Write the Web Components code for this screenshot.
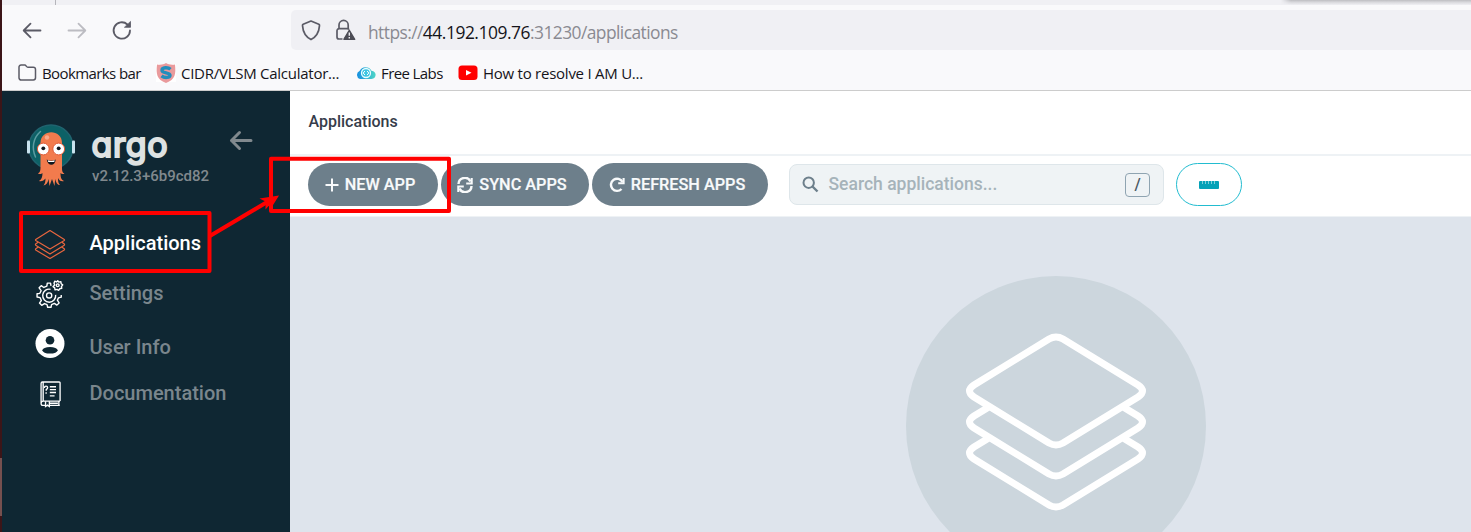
<!DOCTYPE html>
<html lang="en">
<head>
<meta charset="utf-8">
<title>Applications</title>
<style>
body{margin:0;width:1471px;height:532px;overflow:hidden;font-family:Roboto,"Liberation Sans",sans-serif;background:#fff}
</style>
</head>
<body>
<argo-window></argo-window>
<script>
const define=(name,css,html)=>customElements.define(name,class extends HTMLElement{
  connectedCallback(){
    if(this.shadowRoot)return;
    const t=document.createElement('template');
    t.innerHTML=`<style>${css}</style>${html}`;
    this.attachShadow({mode:'open'}).append(t.content.cloneNode(true));
  }
});

define('nav-button',`:host{display:block;width:24px;height:24px;color:#5b5b66}:host([off]){color:#bcbcc2}`,`<slot></slot>`);

define('bookmark-item',`:host{display:flex;align-items:center;height:24px;color:#15141a;font:15px/24px "Open Sans",sans-serif;white-space:nowrap}
::slotted(svg){display:block;width:20px;height:20px;margin-right:5px;flex:none}`,`<slot name="icon"></slot><slot></slot>`);

define('address-bar',`:host{display:flex;align-items:center;height:40px;background:#f0f0f4;border-radius:5px 0 0 5px;box-sizing:border-box;padding-left:9px;color:#8a8a91;font:17.4px/40px "Open Sans",sans-serif}
svg{flex:none;display:block}.lock{margin-left:13px}
.url{margin-left:11px;white-space:nowrap;padding-top:4px;letter-spacing:-.56px}b{font-weight:400;color:#15141a;letter-spacing:-.46px}`,
`<svg width="22" height="22" viewBox="0 0 22 22" fill="none" stroke="#5b5b66" stroke-width="1.7" stroke-linejoin="round"><path d="M11 2 L18.8 5.3 Q19.6 5.7 19.5 6.6 C19 13.5 16.5 17.7 11 20.6 C5.5 17.7 3 13.5 2.500 6.600 Q2.400 5.700 3.200 5.300Z"/></svg>
<svg class="lock" width="22" height="22" viewBox="0 0 22 22" fill="none" stroke="#5b5b66" stroke-width="1.700"><path d="M4 9.500V6a4.600 4.600 0 0 1 9.200 0v3.500M7.500 20H4a2 2 0 0 1-2-2v-6.300a2 2 0 0 1 2-2H12a2 2 0 0 1 2 1"/><path d="M14.300 11.300 L19.700 20.300H8.900Z" fill="#4c4c55" stroke="#4c4c55" stroke-width="1.400" stroke-linejoin="round"/><path d="M14.300 13.500v3.200M14.300 18v1.500" stroke="#f0f0f4" stroke-width="1.400"/></svg>
<div class="url">https://<b>44.192.109.76</b>:31230/applications</div>`);

define('browser-chrome',`:host{display:block;height:91px;box-sizing:border-box;background:#f9f9fb;border-bottom:1px solid #ccc;overflow:hidden}
.tabs{height:5px;background:#f0f0f4;display:flex;justify-content:space-between}
.tabs i{width:1px;margin-left:53px;background:#b5b5bb}.tabs b{width:190px;background:linear-gradient(#bdbdc1,#d9d9dd 45%,#f0f0f4);-webkit-mask:linear-gradient(90deg,transparent,#000 10px)}
.row{display:flex;padding-top:5px;height:40px}.nav{width:289px;display:flex;gap:21px;padding:8px 0 0 18px;box-sizing:border-box;flex:none}
address-bar{flex:1}.marks{display:flex;padding:11px 0 0 13px}
.m1{width:126px;letter-spacing:-.6px}.m2{width:183px;margin-left:15px;letter-spacing:-.26px}.m3{width:87px;margin-left:17px;letter-spacing:-.6px}.m4{margin-left:15px;letter-spacing:-.25px}`,
`<div class="tabs"><i></i><b></b></div>
<div class="row"><div class="nav">
<nav-button><svg width="24" height="24" viewBox="0 0 24 24" fill="none" stroke="currentColor" stroke-width="1.800" stroke-linecap="round" stroke-linejoin="round"><path d="M20.500 12.500H4M10.500 5.700L3.700 12.500l6.800 6.800"/></svg></nav-button>
<nav-button off><svg width="24" height="24" viewBox="0 0 24 24" fill="none" stroke="currentColor" stroke-width="1.800" stroke-linecap="round" stroke-linejoin="round"><path d="M3.500 12.500H20M13.500 5.700l6.800 6.800-6.800 6.800"/></svg></nav-button>
<nav-button><svg width="24" height="24" viewBox="0 0 24 24" fill="none" stroke="currentColor" stroke-width="1.800" stroke-linecap="round"><path d="M20 12.500a8.200 8.200 0 1 1-2.600-6"/><path d="M20.500 3.800V9.300H14.800Z" fill="currentColor" stroke-width=".800" stroke-linejoin="round"/></svg></nav-button>
</div><address-bar></address-bar></div>
<div class="marks">
<bookmark-item class="m1"><svg slot="icon" style="width:22px;margin-right:5px" viewBox="0 0 22 20" fill="none" stroke="#5b5b66" stroke-width="1.500" stroke-linejoin="round"><path d="M5.800 2h4c1.200 0 1.700 2.300 3 2.300h5.500a2.200 2.200 0 0 1 2.200 2.200v8.300a2.200 2.200 0 0 1-2.200 2.200H6.200a2.200 2.200 0 0 1-2.200-2.200V4.200a2 2 0 0 1 2-2.200z"/></svg>Bookmarks bar</bookmark-item>
<bookmark-item class="m2"><svg slot="icon" viewBox="0 0 20 20"><path fill="#fff" d="M0 1h20v18H0z"/><path fill="#e99a9c" d="M10 0c2 1.600 6 2 9 1.500 1 9.500.500 15-9 18.500C.500 16.500 0 11 1 1.500 4 2 8 1.600 10 0z"/><path d="M14.500 6.300C12 4 6 4.200 6 7.200c0 3.500 8 1.800 8 5 0 2.700-5.500 3-8.500.6" fill="none" stroke="#238ebc" stroke-width="3.400"/></svg>CIDR/VLSM Calculator...</bookmark-item>
<bookmark-item class="m3"><svg slot="icon" viewBox="0 0 20 20"><defs><linearGradient id="g"><stop stop-color="#168fe0"/><stop offset="1" stop-color="#4fd6c7"/></linearGradient></defs><path fill="url(#g)" d="M4 16a4.300 4.300 0 0 1-.5-8 6.800 6.800 0 0 1 12-.3c6 .5 5 8.300 0 8.300z"/><circle cx="10" cy="10" r="4.500" fill="#3fc6e2" stroke="#e9fcff" stroke-width="1.300"/><path d="M8.900 8l-1.700 2 1.700 2M11.100 8l1.700 2-1.700 2" fill="none" stroke="#fff"/></svg>Free Labs</bookmark-item>
<bookmark-item class="m4"><svg slot="icon" viewBox="0 0 20 20"><rect x=".5" y="2.500" width="19" height="14.500" rx="3.500" fill="red"/><path d="M8 7l5.500 2.800L8 12.600z" fill="#fff"/></svg>How to resolve I AM U...</bookmark-item>
</div>`);

define('octo-logo',`:host{display:block;width:48px;height:64px}`,
`<svg width="48" height="64" viewBox="0 0 48 64"><circle cx="24" cy="24" r="22" fill="#0d6166" stroke="#20636f" stroke-width="1.500"/><rect x="0" y="17.500" width="3" height="13" rx="1" fill="#c9e3ef"/><rect x="45" y="17.500" width="3" height="13" rx="1" fill="#c9e3ef"/><path d="M8.500 34C4.500 25 6 15 13.500 8.500" fill="none" stroke="#5c9ca2" stroke-width="1.500" stroke-linecap="round"/>
<path fill="#f27b4d" d="M13.500 27V20c0-14.500 21.500-14.500 21.500 0v25c0 4 1 5 2.500 5.500-1.500 1-3 .5-4-.5 0 5 1 7 3.500 8-2.500 1-5-.5-6-3 0 4 .5 5.500 2 7-2.500 0-4-2-4.800-6l-.7 7-2.500-7-2.500 7-1-7c-.8 4-2 6-5 6.500 1.500-2 2-4 2-7-1.500 2-4 3.500-6.500 2.500 2.500-1.500 3.500-4 3.500-8-1 1-3 1.500-4.500.5 2-1 2.500-3 2.500-6z"/>
<circle cx="20" cy="14.500" r="2.200" fill="#faa98a"/><g stroke="#df5a35" stroke-width="1"><circle cx="16.300" cy="26" r="5.900" fill="#fff"/><circle cx="31.700" cy="26" r="5.900" fill="#fff"/></g><circle cx="16.300" cy="25.300" r="1.900" fill="#101820"/><circle cx="31.700" cy="25.300" r="1.900" fill="#101820"/><path d="M19.700 36.500q4.500 2.500 9 0c-.5 7-8 7-9 0z" fill="#101820"/><path d="M20.700 37.200q3.500 1.500 7 0l-.4 1.800h-6z" fill="#fff"/></svg>`);

define('menu-item',`:host{display:flex;align-items:center;height:40px;padding-left:32px;color:#7a868d;font:500 20px/40px Roboto,sans-serif}
:host([active]){color:#fff}::slotted(svg){width:32px;height:32px;margin-right:23.500px;flex:none;overflow:visible}`,`<slot name="icon"></slot><slot></slot>`);

define('side-bar',`:host{display:block;width:288px;flex:none;background:#0f2733}
.brand{display:flex;padding:32px 0 0 25px;height:73px}
.name{margin-left:17px;width:137px}.argo{height:44px;font:400 34px/44px Inter,sans-serif;font-feature-settings:"cv11","ss03";color:#dee2e2;-webkit-text-stroke:2.100px #dee2e2;letter-spacing:.6px;margin-left:-.5px}
.ver{font:500 15px/18px Roboto,sans-serif;color:#81898e;white-space:nowrap}.back{margin-top:5px}
menu-item.a{margin-top:27px}menu-item.s{margin-top:10px}menu-item.u{margin-top:14px}menu-item.d{margin-top:6px}`,
`<div class="brand"><octo-logo></octo-logo><div class="name"><div class="argo">argo</div><div class="ver">v2.12.3+6b9cd82</div></div>
<svg class="back" width="24" height="24" viewBox="0 0 24 24" fill="none" stroke="#81898e" stroke-width="3" stroke-linecap="round" stroke-linejoin="round"><path d="M22 12.500H2.500M10.500 4.500L2.500 12.500l8 8"/></svg></div>
<menu-item class="a" active><svg slot="icon" viewBox="-16 -16 32 32" fill="none" stroke="#e9663e" stroke-width="1.200" stroke-linejoin="round"><g transform="translate(0 1.500)"><path d="M0 -14L14.300 -5Q14.800 -4.500 14.300 -4L0 4.500L-14.300 -4Q-14.800 -4.500 -14.300 -5Z"/><path d="M-12 -2.200L-14.300 -.5Q-14.800 0 -14.300 .700L0 9.500L14.300 .700Q14.800 0 14.300 -.5L12 -2.200M-12 2.800L-14.300 4.300Q-14.800 4.800 -14.300 5.500L0 14L14.300 5.500Q14.800 4.800 14.300 4.300L12 2.800"/></g></svg>Applications</menu-item>
<menu-item class="s"><svg slot="icon" viewBox="0 0 32 32" fill="none" stroke="#fff" stroke-width="1.500" stroke-linejoin="round"><g transform="translate(1.200 1.900) scale(.93)"><path d="M17 7.500l-.5-3h-3.500l-.5 3.300-3.200 1.400L6.500 7.300 4.200 9.600l2.200 3L5 15.500l-3 .5v3.500l3.300.7 1.300 3-2 2.800 2.400 2.400 3-1.900 2.700 1.200.7 2.800H17l.6-2.900 3-1.300 2.700 1.900 2.400-2.400-1.900-2.900 1.200-2.500 3-.8v-2.200"/><circle cx="15" cy="17.800" r="2.800"/><path d="M16.500 11.200a7 7 0 1 0 5.500 6"/><path d="M21 2.500l2 .8 1.200-1.300 1.200 1.400 2.200-.5.300 2.300 1.700 1.200-1.400 1.700.4 2-2.200.5-1.200 1.700-1.700-1-2.200.5-.3-2.200-1.800-1.300L21 6.600l-.8-2z"/><circle cx="24.200" cy="6.800" r="1.500"/></g></svg>Settings</menu-item>
<menu-item class="u"><svg slot="icon" viewBox="0 0 32 32"><g transform="translate(0 -3.500)"><circle cx="16" cy="16" r="14.500" fill="#fff"/><circle cx="16" cy="12.800" r="4.300" fill="#0f2733"/><ellipse cx="16" cy="22.800" rx="7.600" ry="3.300" fill="#0f2733"/></g></svg>User Info</menu-item>
<menu-item class="d"><svg slot="icon" viewBox="0 0 32 32" fill="none" stroke="#fff" stroke-width="1.400"><g transform="translate(1.100 1.700) scale(.95)"><path d="M26.300 23.500V4.500Q26.300 3.500 25.300 3.500H7.700Q6.300 3.500 6.300 5V26Q6.300 28 8.300 28H11M15 28H26M8.500 4v19.500M6.300 26Q6.300 23.600 8.500 23.600H26.300M25 24v4M15 25.800h9"/><path d="M11 23.700v5.500l2-1.400 2 1.400v-5.500M15.500 8.500h6.500M15.500 11.500h6.500M15.500 14.500h6.500M15.500 18h5"/><path d="M9.800 9.700q0-1.800 1.700-1.800t1.700 1.700q0 1-1.500 1.900v1.300M11.600 14.300v1.500"/></g></svg>Documentation</menu-item>`);

define('pill-button',`:host{display:flex;align-items:center;justify-content:center;box-sizing:border-box;height:43px;border-radius:22px;background:#6d7f8b;color:#f8fafb;font:500 16.250px/43px Roboto,sans-serif;white-space:nowrap;padding-right:6px;-webkit-text-stroke:.2px #f8fafb}
::slotted(svg){flex:none;margin-right:6px}:host([outline]){background:#fff;border:1.500px solid #22bcd0;padding:0}:host([outline]) ::slotted(svg){margin:0}`,`<slot></slot>`);

define('search-box',`:host{display:flex;align-items:center;box-sizing:border-box;width:375px;height:41px;border:1px solid #dee6ea;border-radius:8px;background:#eff3f5;padding:0 13px 0 12px;font:500 17.500px/38px Roboto,sans-serif;color:#a6b3ba}
span{flex:1;margin-left:9.500px;margin-top:-1px}kbd{font:500 16px/22px Roboto,sans-serif;width:25px;height:24px;box-sizing:border-box;border:1px solid #8fa4b1;border-radius:4px;text-align:center;color:#495763}`,
`<svg width="17" height="17" viewBox="0 0 17 17" fill="none" stroke="#6d7f8b" stroke-width="2"><circle cx="6.700" cy="6.700" r="5.200"/><path d="M10.500 10.500l5 5" stroke-width="2.400"/></svg><span>Search applications...</span><kbd>/</kbd>`);

define('layers-emblem',`:host{display:block;width:300px;height:300px;border-radius:50%;background:#ccd6dd}`,
`<svg width="300" height="300" viewBox="-150 -150 300 300" fill="none" stroke="#fff" stroke-width="7"><path d="M-7 -87Q0 -91 7 -87L82 -41Q91 -35 82 -29L7 17Q0 21 -7 17L-82 -29Q-91 -35 -82 -41Z"/><path d="M-68 -18.500L-82 -10Q-91 -4 -82 2L-7 48Q0 52 7 48L82 2Q91 -4 82 -10L68 -18.500"/><path d="M-68 12.500L-82 21Q-91 27 -82 33L-7 79Q0 83 7 79L82 33Q91 27 82 21L68 12.500"/></svg>`);

define('app-main',`:host{display:block;flex:1;background:#dee4ec;overflow:hidden}
header{height:63px;background:#fff;border-bottom:2px solid #eef2f5;font:500 16px/61px Roboto,sans-serif;color:#363c4a;padding-left:18.500px}
.bar{display:flex;height:61px;background:#fff;padding:7px 0 0 18px;box-sizing:border-box;border-bottom:1px solid #eef2f5}
.n{width:130px}.s{width:148px;margin-left:3px}.r{width:176px;margin-left:3px}.w{width:66px;margin-left:12px}
search-box{margin:1px 0 0 21px}layers-emblem{margin:59px 0 0 616px}`,
`<header>Applications</header><div class="bar">
<pill-button class="n"><svg width="14" height="16" viewBox="0 0 14 16" stroke="#f8fafb" stroke-width="2"><path d="M.5 8h13M7 1.500v13"/></svg>NEW APP</pill-button>
<pill-button class="s"><svg width="16" height="16" viewBox="0 0 16 16" fill="none" stroke="#f8fafb" stroke-width="2.400"><path d="M1.500 7A6.300 6.300 0 0 1 13.500 4.500M14.500 9A6.300 6.300 0 0 1 2.500 11.500"/><path d="M14.700 1v5.500H9.200M1.300 15V9.500H6.800" stroke-width="2.100"/></svg>SYNC APPS</pill-button>
<pill-button class="r"><svg width="16" height="16" viewBox="0 0 16 16" fill="none" stroke="#f8fafb" stroke-width="2.400"><path d="M12.500 12A6.100 6.100 0 1 1 13.500 5"/><path d="M14.600 1v5.300H9.200" stroke-width="2.100"/></svg>REFRESH APPS</pill-button>
<search-box></search-box>
<pill-button class="w" outline><svg width="20" height="8" viewBox="0 0 20 8"><rect width="20" height="8" rx="1" fill="#05a2b8"/><path d="M3.500 0v3M6.500 0v3M9.500 0v3M12.500 0v3M15.500 0v3" stroke="#7dd0dc"/></svg></pill-button>
</div><layers-emblem></layers-emblem>`);

define('red-marks',`:host{position:absolute;left:0;top:0;pointer-events:none}svg{display:block}`,
`<svg width="1471" height="532" viewBox="0 0 1471 532" fill="none" stroke="red" stroke-width="4" stroke-linejoin="round"><rect x="21" y="213" width="188.500" height="58"/><rect x="271" y="158.700" width="178" height="52.300"/><path d="M209 236.500L268 201.500"/><path d="M279 195.500L259.500 198.500L265.500 201.500L265.500 209.500L268.500 206L271.500 207.500Z" fill="red" stroke="none"/></svg>`);

define('argo-window',`:host{display:flex;position:relative;width:1471px;height:532px;overflow:hidden}
.edge{width:2px;flex:none;background:linear-gradient(#3c1518 458px,#76504f 458px 516px,#3c1518 516px)}.col{flex:1;display:flex;flex-direction:column;min-width:0}.body{flex:1;display:flex;min-height:0}`,
`<div class="edge"></div><div class="col"><browser-chrome></browser-chrome><div class="body"><side-bar></side-bar><app-main></app-main></div></div><red-marks></red-marks>`);
</script>
</body>
</html>
